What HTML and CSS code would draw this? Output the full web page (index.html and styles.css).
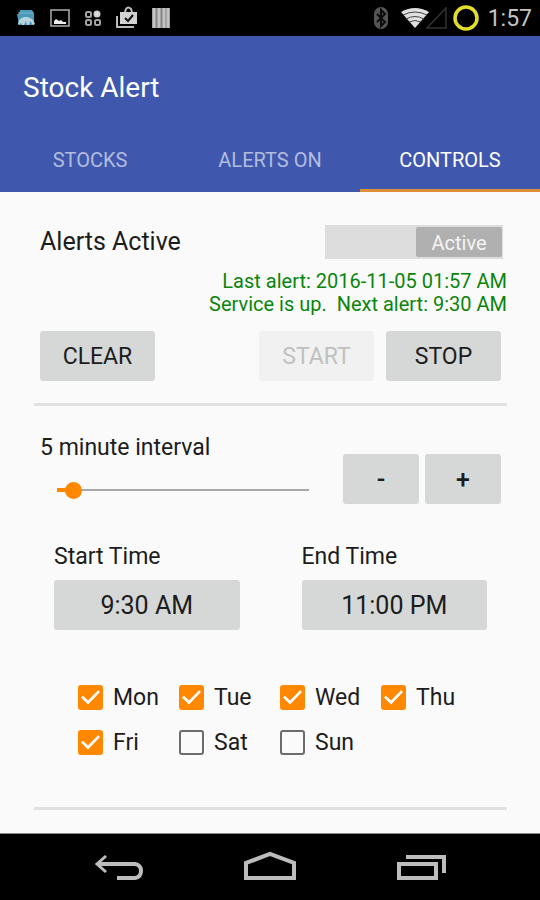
FILE: index.html
```html
<!DOCTYPE html>
<html lang="en">
<head>
<meta charset="utf-8">
<meta name="viewport" content="width=device-width, initial-scale=1">
<title>Stock Alert</title>
<link rel="stylesheet" href="styles.css">
</head>
<body>
<div class="status-bar">
  <div class="notifications">
    <svg width="20" height="20" viewBox="0 0 20 20"><path d="M4 2h12l2 3v12H3L1 6h2z" fill="#4a9abb"/><path d="M2 5h15" stroke="#7fb4ca" stroke-width="1"/><path d="M2 17c0-6 4-8 8-8s7 2 9 7l-2 1-3-4-1 4h-2l-1-4-2 4H6l-1-2z" fill="#b9d3dc"/></svg>
    <svg width="20" height="20" viewBox="0 0 20 20"><rect x="1" y="2" width="18" height="16" fill="none" stroke="#a4a4a4" stroke-width="1.6"/><path d="M4 16v-3l2-2 3 2 2-1 2 2h3v2z" fill="#eee"/></svg>
    <svg width="18" height="18" viewBox="0 0 18 18" fill="none" stroke="#a4a4a4" stroke-width="2"><rect x="2" y="3" width="5" height="5" rx="1.5"/><circle cx="13" cy="5" r="2.5" fill="#e0e0e0" stroke="#d0d0d0"/><rect x="2" y="11" width="5" height="5" rx="1.5"/><rect x="11" y="11" width="5" height="5" rx="1.5"/></svg>
    <svg width="22" height="24" viewBox="0 0 22 24"><path d="M1 10v11h17" fill="none" stroke="#bcbcbc" stroke-width="2"/><path d="M4 6h17v12H4z" fill="#d2d2d2"/><path d="M9 6l1-3q2-3 5 0l1 3" fill="none" stroke="#bcbcbc" stroke-width="2"/><path d="M9 12l3 3 5-6" fill="none" stroke="#111" stroke-width="2"/></svg>
    <svg width="18" height="22" viewBox="0 0 18 22"><path d="M0 1h18v20H0z" fill="#858585"/><path d="M2 1v20M7 1v20M12 1v20M16 1v20" stroke="#c4c4c4" stroke-width="3"/></svg>
  </div>
  <div class="system">
    <svg width="16" height="24" viewBox="0 0 16 24"><rect x="1" y="1" width="14" height="22" rx="7" fill="#565656"/><path d="M4 8l8 8-4 4V4l4 4-8 8" fill="none" stroke="#0a0a0a" stroke-width="2"/></svg>
    <div class="signal">
      <svg width="28" height="22" viewBox="0 0 28 22"><path d="M14 21L0 5Q14-3 28 5z" fill="#e0e0e0"/><path d="M2 8q12-6 24 0M5 12q9-5 18 0M8 15q6-3 12 0" fill="none" stroke="#444" stroke-width="1"/></svg>
      <svg width="22" height="22" viewBox="0 0 22 22"><path d="M1 21L20 1v20z" fill="none" stroke="#333" stroke-width="1.5"/></svg>
    </div>
    <svg width="28" height="28" viewBox="0 0 28 28"><circle cx="14" cy="14" r="11" fill="none" stroke="#e2df2c" stroke-width="3.5"/></svg>
    <time class="clock">1:57</time>
  </div>
</div>

<header class="app-bar">
  <h1 class="app-title">Stock Alert</h1>
  <nav class="tabs">
    <a class="tab" href="#stocks">STOCKS</a>
    <a class="tab" href="#alerts">ALERTS ON</a>
    <a class="tab tab-current" href="#controls" aria-current="page">CONTROLS</a>
  </nav>
</header>

<main class="controls">
  <section>
    <div class="active-row">
      <span class="active-label" id="active-label">Alerts Active</span>
      <button class="switch" type="button" role="switch" aria-checked="true" aria-labelledby="active-label"><span class="switch-thumb">Active</span></button>
    </div>
    <p class="service">Last alert: 2016-11-05 01:57 AM<br>Service is up.&nbsp; Next alert: 9:30 AM</p>
    <div class="actions">
      <button class="btn btn-wide btn-clear" type="button">CLEAR</button>
      <button class="btn btn-wide" type="button" disabled>START</button>
      <button class="btn btn-wide" type="button">STOP</button>
    </div>
  </section>

  <hr class="divider">

  <section class="interval">
    <div class="interval-main">
      <label class="label" for="interval">5 minute interval</label>
      <input class="slider" id="interval" type="range" min="1" max="120" value="5">
    </div>
    <div class="steppers">
      <button class="btn btn-step" type="button">-</button>
      <button class="btn btn-step" type="button">+</button>
    </div>
  </section>

  <section class="times">
    <div class="time">
      <label class="label" for="start-time">Start Time</label>
      <button class="btn btn-time" id="start-time" type="button">9:30 AM</button>
    </div>
    <div class="time">
      <label class="label" for="end-time">End Time</label>
      <button class="btn btn-time" id="end-time" type="button">11:00 PM</button>
    </div>
  </section>

  <section class="days">
    <label class="day"><input class="check" type="checkbox" checked>Mon</label>
    <label class="day"><input class="check" type="checkbox" checked>Tue</label>
    <label class="day"><input class="check" type="checkbox" checked>Wed</label>
    <label class="day"><input class="check" type="checkbox" checked>Thu</label>
    <label class="day"><input class="check" type="checkbox" checked>Fri</label>
    <label class="day"><input class="check" type="checkbox">Sat</label>
    <label class="day"><input class="check" type="checkbox">Sun</label>
  </section>

  <hr class="divider divider-end">
</main>

<footer class="nav-bar">
  <button class="nav-btn" type="button" aria-label="Back"><svg width="52" height="32" viewBox="0 0 52 32" fill="none" stroke="#bdbdbd" stroke-width="4"><path d="M6 13h37q6 1 6 7t-6 7H25"/><path d="M14 5l-9 8 9 8" stroke-width="3"/></svg></button>
  <button class="nav-btn" type="button" aria-label="Home"><svg width="52" height="32" viewBox="0 0 52 32" fill="none" stroke="#bdbdbd" stroke-width="4"><path d="M2 27V12L26 3l24 9v15z"/></svg></button>
  <button class="nav-btn" type="button" aria-label="Recent apps"><svg width="52" height="32" viewBox="0 0 52 32" fill="none" stroke="#bdbdbd" stroke-width="4"><path d="M3 13h37v14H3z"/><path d="M10 6h38v16"/></svg></button>
</footer>
</body>
</html>
```
FILE: styles.css
```css
* {
  box-sizing: border-box;
}

body {
  margin: 0;
  min-height: 100vh;
  display: flex;
  flex-direction: column;
  background: #fafafa;
  color: #1c1c1c;
  font-family: Roboto, "Liberation Sans", sans-serif;
  font-size: 23px;
}

button {
  font: inherit;
  color: inherit;
  border: 0;
  padding: 0;
}

svg {
  display: block;
}

.status-bar {
  height: 36px;
  padding: 0 8px 0 16px;
  display: flex;
  align-items: center;
  justify-content: space-between;
  background: #000;
}

.notifications {
  display: flex;
  align-items: center;
  gap: 14px;
}

.system {
  display: flex;
  align-items: center;
  gap: 8px;
}

.signal {
  display: flex;
  margin-left: 4px;
}

.signal svg + svg {
  margin-left: -3px;
}

.signal + svg {
  margin-left: -4px;
}

.clock {
  color: #c4c4c4;
  font-size: 23px;
}

.app-bar {
  background: #3f58ae;
  padding-top: 12px;
}

.app-title {
  margin: 0;
  padding: 0 23px;
  color: #fff;
  font-size: 28px;
  font-weight: 400;
  line-height: 80px;
}

.tabs {
  display: grid;
  grid-template-columns: repeat(3, 1fr);
}

.tab {
  height: 64px;
  border-bottom: 3px solid transparent;
  color: #b2bcdf;
  font-size: 20px;
  line-height: 65px;
  text-align: center;
  text-decoration: none;
}

.tab-current {
  border-bottom-color: #e08e35;
  color: #fff;
}

.controls {
  flex: 1;
  padding: 32px 33px 0 34px;
}

.active-row {
  display: flex;
  align-items: center;
  justify-content: space-between;
  padding: 0 4px 0 6px;
}

.active-label {
  font-size: 25px;
  line-height: 36px;
}

.switch {
  width: 178px;
  height: 34px;
  padding: 2px 1px;
  display: flex;
  justify-content: flex-end;
  background: #ddd;
}

.switch-thumb {
  width: 86px;
  border-radius: 2px;
  background: #b0b0b0;
  color: #f4f4f4;
  font-size: 20px;
  line-height: 32px;
  height: 30px;
}

.service {
  margin: 10px 0 15px;
  color: #0a850a;
  font-size: 20px;
  line-height: 23px;
  text-align: right;
}

.actions {
  display: flex;
  gap: 12px;
  padding: 0 6px;
}

.btn {
  height: 50px;
  border-radius: 3px;
  background: #d6d8d7;
}

.btn:disabled {
  background: #f1f1f1;
  color: #c0c0c0;
}

.btn-wide {
  width: 115px;
}

.btn-clear {
  margin-right: auto;
}

.divider {
  height: 3px;
  margin: 22px 0 28px;
  border: 0;
  background: #e1e1e1;
}

.divider-end {
  margin: 42px 0 23px;
}

.interval {
  display: flex;
  align-items: flex-end;
  gap: 34px;
  padding: 0 6px;
}

.interval-main {
  flex: 1;
  display: flex;
  flex-direction: column;
  gap: 16px;
  padding-bottom: 2px;
}

.label {
  line-height: 28px;
}

.slider {
  appearance: none;
  height: 24px;
  margin: 0 0 0 17px;
  background:
    linear-gradient(#ff8800, #ff8800) left center / 16px 4px no-repeat,
    linear-gradient(#a8a8a8, #a8a8a8) center / 100% 2px no-repeat;
}

.slider::-webkit-slider-thumb {
  appearance: none;
  width: 17px;
  height: 17px;
  border-radius: 50%;
  background: #ff8800;
}

.steppers {
  display: flex;
  gap: 6px;
}

.btn-step {
  width: 76px;
  font-size: 25px;
  font-weight: 500;
}

.times {
  display: grid;
  grid-template-columns: 1fr 1fr;
  gap: 62px;
  margin-top: 39px;
  padding: 0 20px;
}

.time {
  display: flex;
  flex-direction: column;
  gap: 9px;
}

.btn-time {
  font-size: 25px;
}

.days {
  display: grid;
  grid-template-columns: repeat(4, 1fr);
  margin-top: 45px;
  padding: 0 25px 0 44px;
}

.day {
  height: 45px;
  display: flex;
  align-items: center;
  gap: 10px;
}

.check {
  appearance: none;
  width: 25px;
  height: 25px;
  margin: 0;
  display: grid;
  place-items: center;
  border: 2px solid #6c6c6c;
  border-radius: 3px;
}

.check:checked {
  border-color: #ff8800;
  background: #ff8800;
}

.check:checked::before {
  content: "";
  width: 19px;
  height: 15px;
  background: #fff;
  clip-path: polygon(0 50%, 10% 38%, 37% 70%, 90% 2%, 100% 13%, 37% 96%);
}

.nav-bar {
  height: 67px;
  padding: 0 42px;
  display: grid;
  grid-template-columns: repeat(3, 1fr);
  align-items: center;
  border-top: 1px solid #888;
  background: #000;
}

.nav-btn {
  display: flex;
  justify-content: center;
  background: none;
}
```
